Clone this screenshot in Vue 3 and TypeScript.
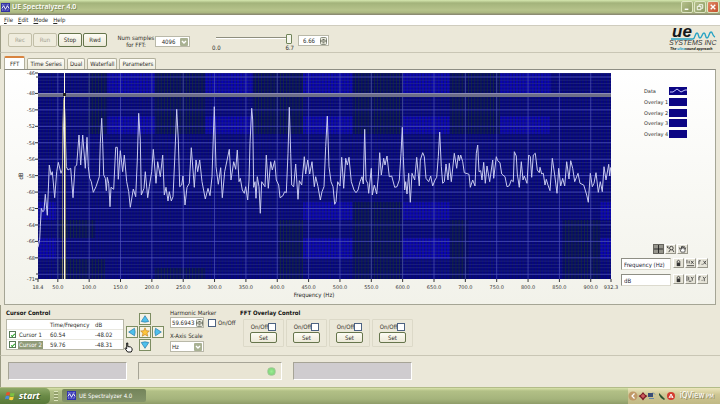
<script setup lang="ts">
import { ref } from 'vue'

interface Tick { at: number; label: string }
interface Patch { x: number; y: number; w: number; h: number }

const menus = ['File', 'Edit', 'Mode', 'Help']
const transport = ref([
  { label: 'Rec', off: true },
  { label: 'Run', off: true },
  { label: 'Stop', off: false },
  { label: 'Rwd', off: false },
])
const tabs = ['FFT', 'Time Series', 'Dual', 'Waterfall', 'Parameters']
const activeTab = ref('FFT')
const samples = ref('4096')
const position = ref(6.66)
const positionText = ref('6.66')
const harmonic = ref('59.6943')
const harmonicOn = ref(false)
const scaleUnit = ref('Hz')
const xName = ref('Frequency (Hz)')
const yName = ref('dB')
const legend = ['Data', 'Overlay 1', 'Overlay 2', 'Overlay 3', 'Overlay 4']
const overlays = ref([false, false, false, false])
const cursors = ref([
  { name: 'Cursor 1', on: true, time: '60.54', db: '-48.02', picked: false },
  { name: 'Cursor 2', on: true, time: '59.76', db: '-48.31', picked: true },
])
const arrows = [
  { name: 'up', turn: 0 },
  { name: 'left', turn: 270 },
  { name: 'right', turn: 90 },
  { name: 'down', turn: 180 },
]

// Plot area inside the chart drawing
const plot = { x: 24, y: 3, w: 573, h: 206 }
const hzToX = (hz: number): number => plot.x + ((hz - 18.4) / 913.9) * plot.w
const dbToY = (db: number): number => plot.y + 4 - (db + 46) * 8.22

const majorHz = Array.from({ length: 18 }, (_, i) => (i + 1) * 50)
const xTicks: Tick[] = [
  { at: plot.x, label: '18.4' },
  ...majorHz.map((hz) => ({ at: hzToX(hz), label: hz.toFixed(1) })),
  { at: plot.x + plot.w, label: '932.3' },
]
const majorDb = Array.from({ length: 13 }, (_, i) => -46 - i * 2)
const yTicks: Tick[] = [
  { at: plot.y, label: '-46' },
  ...majorDb.slice(1, 12).map((db) => ({ at: dbToY(db), label: String(db) })),
  { at: plot.y + plot.h, label: '-71' },
]
const minorX = Array.from({ length: 183 }, (_, i) => hzToX(20 + i * 5)).filter((x) => x < plot.x + plot.w)
const minorY = Array.from({ length: 62 }, (_, i) => dbToY(-45.6 - i * 0.4)).filter((y) => y > plot.y && y < plot.y + plot.h)

const glow: Patch[] = [
  { x: 69, y: 0, w: 48, h: 21 }, { x: 167, y: 0, w: 48, h: 21 }, { x: 265, y: 0, w: 50, h: 21 }, { x: 365, y: 0, w: 47, h: 21 }, { x: 462, y: 0, w: 51, h: 21 },
  { x: 69, y: 43, w: 49, h: 18 }, { x: 167, y: 43, w: 48, h: 18 }, { x: 265, y: 43, w: 50, h: 18 }, { x: 365, y: 43, w: 47, h: 18 }, { x: 462, y: 43, w: 50, h: 18 },
  { x: 0, y: 129, w: 18, h: 18 }, { x: 265, y: 129, w: 50, h: 18 }, { x: 365, y: 129, w: 47, h: 18 }, { x: 562, y: 129, w: 11, h: 18 },
  { x: 0, y: 165, w: 18, h: 21 }, { x: 265, y: 165, w: 50, h: 21 }, { x: 365, y: 165, w: 47, h: 21 }, { x: 562, y: 165, w: 11, h: 21 },
]
const shade: Patch[] = [
  { x: 50, y: 0, w: 19, h: 61 }, { x: 117, y: 0, w: 50, h: 61 }, { x: 215, y: 0, w: 50, h: 61 }, { x: 315, y: 0, w: 50, h: 61 }, { x: 412, y: 0, w: 50, h: 61 },
  { x: 19, y: 147, w: 38, h: 18 }, { x: 19, y: 186, w: 48, h: 20 }, { x: 240, y: 147, w: 25, h: 59 }, { x: 315, y: 129, w: 50, h: 77 }, { x: 412, y: 147, w: 18, h: 59 },
  { x: 525, y: 147, w: 37, h: 59 }, { x: 117, y: 195, w: 50, h: 11 },
]

// Recorded trace in three blocks; each block has its own origin, in thirds of a unit
const blocks = [
  { dx: -114, dy: 81, data: '114,442 119,418 121,380 124,325 128,335 132,332 136,283 142,346 148,195 153,225 157,215 164,293 170,215 175,187 183,220 187,210 193,0 199,200 204,210 212,205 219,293 225,200 230,195 237,105 242,195 248,105 256,205 261,112 265,200 269,235 274,245 280,277 288,260 298,230 301,130 305,55 308,130 311,225 316,235 319,272 322,232 326,250 330,320 333,262 341,268 347,142 352,142 355,238 361,152 368,215 373,165 380,245 386,275 391,322 400,267 407,290 412,180 416,40 421,120 424,285 432,265 436,215 443,293 448,260 455,215 460,148 468,250 473,185 481,230 488,165 493,285 498,262 504,303 508,275 514,303 519,290 524,180 530,28 535,120 539,260 545,255 549,228 555,315 561,262 568,250 574,143 583,262 588,180 593,215 599,180 606,245 616,297 624,265 630,287 636,230 643,20 648,200 655,253 662,203 667,293 674,215 688,148 693,240 701,185 707,208 712,150 717,245' },
  { dx: 546, dy: -9, data: '61,325 67,360 73,370 77,350 83,390 87,330 90,220 95,115 98,150 101,352 105,335 108,385 112,320 117,350 121,430 125,335 135,350 139,255 145,355 152,275 157,300 164,272 169,330 176,345 180,383 188,378 194,365 199,368 204,250 208,112 212,250 215,345 221,350 227,282 234,388 238,332 245,345 253,260 257,312 263,270 269,312 276,275 283,350 287,320 294,350 301,390 306,365 312,350 317,230 322,138 327,290 333,335 339,350 344,403 348,395 353,335 360,348 365,262 371,355 377,265 382,285 387,262 394,335 402,360 408,368 414,360 420,335 426,320 430,342 434,178 438,330 443,340 446,370 454,295 457,375 463,345 470,372 475,320 479,248 484,315 491,265 495,285 501,258 508,320 515,318 524,352 531,350 538,330 543,250 547,172 550,260 554,360 557,335 561,372 566,310 571,397 576,310 584,330 590,262 598,348 601,270 608,248 613,260 618,325 626,335 632,318 638,348 645,330 650,322 655,260 659,186 664,290' },
  { dx: 1206, dy: -9, data: '8,340 13,335 18,282 24,330 28,280 34,335 43,250 50,295 55,255 58,272 62,255 68,275 73,308 87,313 91,352 98,330 105,348 109,250 113,225 117,305 122,302 126,330 131,277 136,340 141,288 149,335 158,270 161,325 169,260 173,272 180,278 185,312 195,320 201,350 208,347 214,330 220,335 223,245 229,258 232,312 238,352 244,275 249,330 253,318 261,340 266,255 271,260 275,322 280,255 286,250 292,300 298,308 300,292 305,312 310,310 315,345 319,328 325,348 330,362 337,265 344,315 351,370 356,295 362,348 368,325 374,348 380,275 387,327 392,272 398,295 404,335 414,310 420,340 431,345 440,375 445,397 451,310 457,350 462,340 468,308 475,367 481,335 487,365 492,290 498,330 506,283 509,318 512,292' },
]
const trace: string = blocks
  .flatMap((b) => b.data.split(' ').map((p) => {
    const [x, y] = p.split(',').map(Number)
    return `${(plot.x + (x + b.dx) / 3).toFixed(1)},${(plot.y + (y + b.dy) / 3).toFixed(1)}`
  }))
  .join(' ')
</script>

<template>
  <div class="desktop">
    <header class="titlebar">
      <svg class="app-icon" viewBox="0 0 10 10"><rect width="10" height="10" fill="#3030a0" /><path d="M1 2h8M1 8h8M2 1v8M8 1v8" stroke="#9a9ae8" stroke-width="1" stroke-dasharray="1 1" /><path d="M1 6 3 3 5 7 7 3 9 6" fill="none" stroke="#fff" /></svg>
      <h1>UE Spectralyzer 4.0</h1>
      <div class="win-buttons">
        <button type="button" aria-label="Minimize"><svg viewBox="0 0 11 11"><path d="M3 8h4" stroke="#fff" stroke-width="1.5" /></svg></button>
        <button type="button" aria-label="Restore"><svg viewBox="0 0 11 11"><path d="M4.500 4.500V3h4v4H7M2.500 4.800h4v3.700h-4z" fill="none" stroke="#fff" /></svg></button>
        <button type="button" aria-label="Close" class="close"><svg viewBox="0 0 11 11"><path d="M3 3l5 5M8 3l-5 5" stroke="#fff" stroke-width="1.500" /></svg></button>
      </div>
    </header>

    <nav class="menubar">
      <button v-for="m in menus" :key="m" type="button"><u>{{ m[0] }}</u>{{ m.slice(1) }}</button>
    </nav>

    <section class="toolbar">
      <div class="transport">
        <button v-for="b in transport" :key="b.label" type="button" class="push" :disabled="b.off">{{ b.label }}</button>
      </div>
      <label class="samples-label" for="samples">Num samples<br>for FFT:</label>
      <div class="drop samples">
        <select id="samples" v-model="samples"><option>4096</option><option>2048</option></select>
        <span class="drop-arrow"><svg viewBox="0 0 8 8"><path d="M2 3l2 2 2-2" fill="none" stroke="#fff" stroke-width="1.400" /></svg></span>
      </div>
      <div class="slide">
        <input v-model.number="position" type="range" min="0" max="6.7" step="0.01" aria-label="Position">
        <div class="slide-scale"><span>0.0</span><span>6.7</span></div>
      </div>
      <div class="spin">
        <input v-model="positionText" type="text" aria-label="Position value">
        <svg viewBox="0 0 7 8"><rect x=".5" y=".5" width="6" height="7" rx="1" fill="#e8e8dc" stroke="#8b8f80" /><path d="M0 4h7M2.500 2.500h2M2.500 5.800h2" stroke="#5f6355" /></svg>
      </div>
      <svg class="logo" viewBox="0 0 50 28" role="img" aria-label="UE Systems Inc">
        <text x="5" y="13" class="logo-ue">ue</text>
        <path d="M4 15h22c2 0 2-6 4-6s1 5 3 5 2-5 4-5 1 5 3 5 2-6 4-6 1 4 4 5" fill="none" stroke="#27a3c4" stroke-width="1.400" />
        <text x="2" y="21" class="logo-sys">SYSTEMS INC</text>
        <text x="3" y="26" class="logo-tag">The <tspan fill="#1d9ccc">ultra</tspan>sound approach</text>
      </svg>
    </section>

    <nav class="tabs" role="tablist">
      <button v-for="t in tabs" :key="t" type="button" role="tab" :class="{ active: t === activeTab }" :aria-selected="t === activeTab" @click="activeTab = t">{{ t }}</button>
    </nav>

    <main class="panel">
      <svg class="chart" viewBox="0 0 600 230" role="img" aria-label="FFT spectrum">
        <defs>
          <clipPath id="shaded"><rect v-for="(p, i) in shade" :key="i" :x="plot.x + p.x" :y="plot.y + p.y" :width="p.w" :height="p.h" /></clipPath>
        </defs>
        <rect :x="plot.x" :y="plot.y" :width="plot.w" :height="plot.h" fill="#060680" />
        <rect v-for="(p, i) in glow" :key="'g' + i" :x="plot.x + p.x" :y="plot.y + p.y" :width="p.w" :height="p.h" fill="#0a04b2" />
        <g stroke="#101848" stroke-opacity=".5"><line v-for="x in minorX" :key="x" :x1="x" :x2="x" :y1="plot.y" :y2="plot.y + plot.h" /></g>
        <g stroke="#303880" stroke-opacity=".5"><line v-for="y in minorY" :key="y" :x1="plot.x" :x2="plot.x + plot.w" :y1="y" :y2="y" /></g>
        <rect v-for="(p, i) in shade" :key="'s' + i" :x="plot.x + p.x" :y="plot.y + p.y" :width="p.w" :height="p.h" fill="#081430" fill-opacity=".3" />
        <g clip-path="url(#shaded)" stroke="#1e3c34" stroke-opacity=".5"><line v-for="x in minorX" :key="x" :x1="x" :x2="x" :y1="plot.y" :y2="plot.y + plot.h" /></g>
        <g stroke="#5358c4" stroke-opacity=".65">
          <line v-for="hz in majorHz" :key="hz" :x1="hzToX(hz)" :x2="hzToX(hz)" :y1="plot.y" :y2="plot.y + plot.h" />
          <line v-for="db in majorDb" :key="db" :x1="plot.x" :x2="plot.x + plot.w" :y1="dbToY(db)" :y2="dbToY(db)" />
        </g>
        <rect :x="plot.x" y="23" :width="plot.w" height="4" fill="#6d6e88" />
        <rect :x="plot.x" y="23" :width="plot.w" height="1" fill="#8c8db4" />
        <polyline :points="trace" fill="none" stroke="#c8caf0" stroke-width="1" />
        <path d="M48.500 209V55L50 28l1.500 27v154" fill="none" stroke="#b5ad6a" stroke-opacity=".7" />
        <rect x="50" :y="plot.y" width="1" :height="plot.h" fill="#fffbe0" />
        <rect x="49" y="23" width="3" height="3" fill="#222" />
        <g stroke="#333">
          <line v-for="t in xTicks" :key="t.label" :x1="t.at" :x2="t.at" y1="209" y2="212" />
          <line v-for="t in yTicks" :key="t.label" x1="21" x2="24" :y1="t.at" :y2="t.at" />
          <line x1="22" x2="24" y1="7" y2="7" /><line x1="22" x2="24" y1="204" y2="204" />
        </g>
        <g class="axis">
          <text v-for="t in xTicks" :key="t.label" :x="t.at" y="219" text-anchor="middle">{{ t.label }}</text>
          <text v-for="t in yTicks" :key="t.label" x="21" :y="t.at + 2" text-anchor="end">{{ t.label }}</text>
        </g>
        <text class="axis-name" x="300" y="227" text-anchor="middle">Frequency (Hz)</text>
        <text class="axis-name" transform="translate(9 106) rotate(-90)" text-anchor="middle">dB</text>
      </svg>

      <aside class="side">
        <ul class="legend">
          <li v-for="(l, i) in legend" :key="l"><span>{{ l }}</span><svg viewBox="0 0 18 8"><rect width="18" height="8" fill="#0c0684" /><path v-if="i === 0" d="M1 5l3 0 4-3 4 3 4-2 2 0" fill="none" stroke="#c8c8ff" /></svg></li>
        </ul>
        <div class="graph-tools">
          <div class="palette">
            <button type="button" class="mini down" aria-label="Cursor tool"><svg viewBox="0 0 10 9"><path d="M5 0v9M0 4.500h10" stroke="#222" /></svg></button>
            <button type="button" class="mini" aria-label="Zoom tool"><svg viewBox="0 0 10 9"><circle cx="6" cy="3.500" r="2" fill="none" stroke="#333" /><path d="M1 2l2 2M5 5l-2 3M7 5l2 3M2 1v2" stroke="#333" /></svg></button>
            <button type="button" class="mini" aria-label="Pan tool"><svg viewBox="0 0 10 9"><path d="M1.500 3l2 5h4l1-5-1.500 2V1.500L5.500 4V1L4 4V1.500L3.500 5z" fill="#fff" stroke="#333" stroke-width=".8" /></svg></button>
          </div>
          <div class="scale-row">
            <input v-model="xName" type="text" aria-label="X scale name">
            <button type="button" class="mini" aria-label="Lock X scale"><svg viewBox="0 0 10 9"><path d="M3 4h4v4H3z" fill="#333" /><path d="M3.500 4V2.500q1.500-2 3 0V4" fill="none" stroke="#333" /></svg></button>
            <button type="button" class="mini" aria-label="Autoscale X"><svg viewBox="0 0 10 9"><path d="M1 1v4M1 7.500h8M3.500 2v3M5.500 2l3 3.500M8.500 2l-3 3.500" stroke="#333" stroke-width=".9" /></svg></button>
            <button type="button" class="mini" aria-label="X format"><svg viewBox="0 0 10 9"><path d="M1 6V2h2M4 6h1M6 2l3 4M9 2l-3 4" fill="none" stroke="#333" stroke-width=".9" /></svg></button>
          </div>
          <div class="scale-row">
            <input v-model="yName" type="text" aria-label="Y scale name">
            <button type="button" class="mini" aria-label="Lock Y scale"><svg viewBox="0 0 10 9"><path d="M3 4h4v4H3z" fill="#333" /><path d="M3.500 4V2.500q1.500-2 3 0V4" fill="none" stroke="#333" /></svg></button>
            <button type="button" class="mini" aria-label="Autoscale Y"><svg viewBox="0 0 10 9"><path d="M1 1v6M3 7h3M3 2v4M5.500 2L7 4l1.500-2M7 4v2.500" fill="none" stroke="#333" stroke-width=".9" /></svg></button>
            <button type="button" class="mini" aria-label="Y format"><svg viewBox="0 0 10 9"><path d="M1 6V2h2M4 6h1M5.500 2L7 4l2-2M7 4v3" fill="none" stroke="#333" stroke-width=".9" /></svg></button>
          </div>
        </div>
      </aside>
    </main>

    <section class="controls">
      <div class="cursor-box">
        <h2>Cursor Control</h2>
        <table>
          <thead><tr><th class="name"></th><th class="time">Time/Freqency</th><th>dB</th></tr></thead>
          <tbody>
            <tr v-for="c in cursors" :key="c.name">
              <td><label><input v-model="c.on" type="checkbox" class="tick"><span :class="{ picked: c.picked }">{{ c.name }}</span></label></td>
              <td>{{ c.time }}</td><td>{{ c.db }}</td>
            </tr>
          </tbody>
        </table>
      </div>

      <div class="pad">
        <button v-for="a in arrows" :key="a.name" type="button" :class="a.name" :aria-label="'Move ' + a.name">
          <svg viewBox="0 0 12 12"><path d="M6 2l4.500 7q-4.500 1.600-9 0z" fill="#4fc0ec" stroke="#2274a8" stroke-width=".8" :transform="`rotate(${a.turn} 6 6)`" /></svg>
        </button>
        <button type="button" class="center" aria-label="Center cursor"><svg viewBox="0 0 12 12"><path d="M6 1l1.500 3.500 3.700.3-2.800 2.500.9 3.700L6 9l-3.300 2 .9-3.700L.8 4.800l3.700-.3z" fill="#ffc63c" stroke="#c07e20" stroke-width=".8" /></svg></button>
        <svg class="hand" viewBox="0 0 10 12"><path d="M3 1h1.200v4l3 .4L9 7v2L8 11H4L1 7l1-.5 1 1z" fill="#fff" stroke="#000" stroke-width="1" /></svg>
      </div>

      <div class="marker">
        <label for="harmonic">Harmonic Marker</label>
        <div class="marker-row">
          <div class="spin wide">
            <input id="harmonic" v-model="harmonic" type="text">
            <svg viewBox="0 0 7 8"><rect x=".5" y=".5" width="6" height="7" rx="1" fill="#e8e8dc" stroke="#8b8f80" /><path d="M0 4h7M2.500 2.500h2M2.500 5.800h2" stroke="#5f6355" /></svg>
          </div>
          <label class="flag"><input v-model="harmonicOn" type="checkbox" class="box">On/Off</label>
        </div>
        <label for="xscale" class="scale-label">X-Axis Scale</label>
        <div class="drop unit">
          <select id="xscale" v-model="scaleUnit"><option>Hz</option><option>CPM</option></select>
          <span class="drop-arrow"><svg viewBox="0 0 8 8"><path d="M2 3l2 2 2-2" fill="none" stroke="#fff" stroke-width="1.400" /></svg></span>
        </div>
      </div>

      <div class="overlay-box">
        <h2>FFT Overlay Control</h2>
        <div class="overlays">
          <div v-for="(o, i) in overlays" :key="i" class="overlay">
            <label>On/Off<input v-model="overlays[i]" type="checkbox" class="box"></label>
            <button type="button" class="push set">Set</button>
          </div>
        </div>
      </div>
    </section>

    <footer class="status">
      <div class="well grey"></div>
      <div class="well wide"><span class="led"></span></div>
      <div class="well grey"></div>
    </footer>

    <nav class="taskbar">
      <button type="button" class="start"><svg viewBox="0 0 11 10"><path d="M1.500 1.500q2-1 3.500 0L4.300 4.500q-1.500-1-3.500 0z" fill="#e8502c" /><path d="M5.500 1.800q2 1 4 0L9 5q-2 1-4-.2z" fill="#7cc142" /><path d="M.7 5.200q2-1 3.500 0L3.500 8.300q-1.500-1-3.500 0z" fill="#4a8be0" /><path d="M4.800 5.500q2 1 4 0L8 8.700q-2 1-4-.2z" fill="#fbd03c" /></svg>start</button>
      <span class="grip"></span>
      <button type="button" class="task"><svg viewBox="0 0 10 10"><rect width="10" height="10" fill="#3030b0" /><path d="M1 2h8M1 8h8M2 1v8M8 1v8" stroke="#a8a8f0" stroke-dasharray="1 1" /><path d="M1 6 3 3 5 7 7 3 9 6" fill="none" stroke="#fff" /></svg>UE Spectralyzer 4.0</button>
      <div class="tray">
        <svg viewBox="0 0 52 12">
          <circle cx="5" cy="6" r="4.500" fill="#c09a68" /><path d="M6.500 3.500L4 6l2.500 2.500" fill="none" stroke="#fff" stroke-width="1.200" />
          <path d="M15 2l2 2.500 2.500 1.500-2.500 2L15 10.500 13 8l-2.500-2L13 4.500z" fill="#7e1c28" /><path d="M15 4v4M13 6h4" stroke="#e87070" />
          <rect x="20" y="3" width="5" height="4" fill="#3a4e78" /><path d="M21 8.500h5M25 2.500l2 2" stroke="#6c88a8" />
          <path d="M31 3l3 3 3 3-1 1-3-2-2-3z" fill="#2c5230" />
          <circle cx="43" cy="6" r="4" fill="#d43c30" /><path d="M41 8l2-4 2 4M42 7h3" fill="none" stroke="#fff" />
        </svg>
        <span class="clock"><b>iQView</b> PM</span>
      </div>
    </nav>
  </div>
</template>

<style>
html, body { margin: 0; background: #ebe8d9; }
</style>

<style scoped>
.desktop { display: flex; flex-direction: column; min-height: 100vh; box-sizing: border-box; font: 6px/8px "DejaVu Sans Condensed", "Open Sans", sans-serif; color: #2c2c28; background: #ebe8d9; }
.desktop *, .desktop *::before { box-sizing: border-box; }
button, input, select { font: inherit; color: inherit; margin: 0; padding: 0; border: 0; background: none; border-radius: 0; min-width: 0; }
svg { display: block; }
h1, h2, ul { margin: 0; padding: 0; list-style: none; }
h2 { font-size: 6px; line-height: 8px; font-weight: 700; color: #111; white-space: nowrap; }

.titlebar { display: flex; align-items: center; gap: 2px; height: 15px; padding: 0 1px 1px; background: linear-gradient(#d6e8b0 0, #a3b37b 3px, #b6c38b 10px, #a9b57f 13px, #8c8c72 14px); }
.app-icon { width: 9px; height: 9px; }
h1 { flex: 1; font: 600 7px/10px "Open Sans", sans-serif; color: #fff; text-shadow: 1px 1px 0 #7e8a58; }
.win-buttons { display: flex; gap: 1px; }
.win-buttons button { width: 12px; height: 12px; border: 1px solid #dfe6c4; border-radius: 2px; background: linear-gradient(135deg, #b5c08c, #8c9a62); }
.win-buttons .close { background: linear-gradient(135deg, #e08a68, #c4502c); }

.menubar { display: flex; gap: 5px; height: 11px; padding: 0 4px; background: #fff; border-bottom: 1px solid #cfccbe; align-items: center; }

.toolbar { display: flex; align-items: flex-start; height: 27px; padding: 7px 3px 0 7px; border-left: 1px solid #9b9b84; border-bottom: 1px solid #c9c6b5; }
.transport { display: flex; gap: 1px; }
.push { width: 24px; height: 14px; border: 1px solid #66754c; border-radius: 2px; background: linear-gradient(#fdfcf4, #ece9d8); text-align: center; }
.push:disabled { color: #a3a192; border-color: #c2bfa8; background: #efecdd; }
.samples-label { width: 38px; margin: 1px 0 0 10px; line-height: 7px; text-align: center; white-space: nowrap; }
.drop { display: flex; align-items: center; height: 11px; margin: 3px 0 0; padding: 1px; background: #fff; border: 1px solid #b9b8a8; }
.drop select { appearance: none; flex: 1; height: 8px; line-height: 8px; outline: 0; }
.drop-arrow { width: 8px; height: 8px; background: #a9b193; border-radius: 1px; }
.samples { width: 35px; }
.samples select { text-align: center; }
.slide { width: 82px; margin-left: 22px; }
.slide input { appearance: none; display: block; width: 80px; height: 11px; background: linear-gradient(#8e8e7e, #8e8e7e) 4px 4px / 74px 1px no-repeat, linear-gradient(#fff, #fff) 4px 5px / 74px 1px no-repeat; }
.slide input::-webkit-slider-thumb { appearance: none; width: 6px; height: 10px; border: 1px solid #71855a; border-radius: 1px; background: #f6f6ee; }
.slide-scale { display: flex; justify-content: space-between; }
.spin { display: flex; align-items: center; width: 31px; height: 11px; margin: 2px 0 0 4px; padding: 0 1px 0 4px; background: #fff; border: 1px solid #b9b8a8; }
.spin input { flex: 1; width: 100%; height: 8px; }
.spin svg { width: 7px; height: 8px; }
.spin.wide { width: 34px; margin: 0; padding: 0 0 0 1px; }
.logo { width: 50px; height: 28px; margin: -9px 0 0 auto; overflow: visible; }
.logo-ue { font: italic 700 17px "Liberation Sans", sans-serif; fill: #16181a; }
.logo-sys { font: italic 7px "Liberation Sans", sans-serif; fill: #333; }
.logo-tag { font: italic 900 4px Lato, sans-serif; fill: #222; }

.tabs { display: flex; align-items: flex-end; gap: 2px; height: 16px; padding-left: 3px; border-left: 1px solid #9b9b84; }
.tabs button { height: 11px; padding: 0 2px; border: 1px solid #b2b09c; border-bottom: 0; border-radius: 2px 2px 0 0; background: linear-gradient(#fdfcf6, #efecdd); white-space: nowrap; }
.tabs .active { height: 13px; padding: 0 5px; border-top: 2px solid #d88440; background: #fff; }

.panel { display: flex; justify-content: space-between; height: 236px; margin: 0 4px; padding-left: 9px; border: 1px solid #a5a595; border-top-color: #8e8e84; background: linear-gradient(#fff, #f2f2ea); }
.chart { flex: 1; min-width: 0; height: 230px; max-width: 600px; overflow: visible; }
.axis { font-family: "DejaVu Sans", sans-serif; font-size: 5px; fill: #333; }
.axis-name { font-size: 6px; fill: #222; }
.side { display: flex; flex-direction: column; justify-content: space-between; width: 94px; padding: 17px 7px 18px 0; }
.legend { display: flex; flex-direction: column; justify-content: space-between; height: 51px; padding-left: 23px; font-family: "DejaVu Sans", sans-serif; font-size: 5px; }
.legend li { display: flex; justify-content: space-between; height: 8px; align-items: center; width: 43px; white-space: nowrap; }
.legend svg { width: 18px; height: 8px; flex: none; }
.graph-tools { display: flex; flex-direction: column; gap: 4px; }
.palette { display: flex; gap: 1px; padding-left: 32px; }
.mini { width: 11px; height: 10px; flex: none; background: #e6e4d8; border: 1px solid; border-color: #fff #99988c #99988c #fff; }
.mini.down { background: #96958c; border-color: #66655e; }
.mini svg { width: 9px; height: 8px; }
.scale-row { display: flex; gap: 1px; }
.scale-row input { width: 50px; height: 12px; margin-right: 1px; padding: 0 2px; background: #fff; border: 1px solid; border-color: #8e8e84 #dcdace #dcdace #8e8e84; color: #223; }

.controls { display: flex; align-items: flex-start; height: 51px; padding: 4px 6px 0 5px; border-left: 1px solid #9b9b84; border-bottom: 1px solid #c9c6b5; }
.cursor-box { width: 118px; }
table { width: 100%; margin-top: 2px; border-collapse: separate; border-spacing: 0; table-layout: fixed; background: #fff; border: 1px solid #b9b8a8; }
th, td { height: 9px; padding: 0; font-weight: 400; text-align: left; line-height: 9px; white-space: nowrap; }
tr > :first-child { width: 43px; padding-left: 2px; }
th.time { width: 45px; }
td { border-top: 1px solid #e9e8e0; }
td label { display: flex; align-items: center; gap: 2px; }
td label span { padding: 0 1px; line-height: 8px; }
.picked { background: #8f9a78; color: #fff; }
.tick, .box { appearance: none; display: grid; place-items: center; width: 7px; height: 7px; flex: none; border: 1px solid #587a58; background: #fff; }
.tick:checked::before, .box:checked::before { content: ""; width: 4px; height: 2px; border: solid #21a121; border-width: 0 0 1px 1px; transform: rotate(-45deg); }
.box { width: 8px; height: 8px; border-color: #4c6282; }

.pad { position: relative; display: grid; grid-template: "a up b" 12px "left center right" 12px "c down d" 12px / 12px 12px 12px; gap: 1px; margin: 4px 0 0 2px; }
.pad button { border: 1px solid #7d8d62; background: #f5f3e6; }
.pad button svg { width: 10px; height: 10px; }
.up { grid-area: up; } .left { grid-area: left; } .right { grid-area: right; } .down { grid-area: down; } .center { grid-area: center; }
.hand { position: absolute; left: -2px; top: 29px; width: 9px; height: 11px; }

.marker { margin-left: 6px; width: 70px; white-space: nowrap; }
.marker > label { display: block; }
.marker-row { display: flex; align-items: center; gap: 4px; height: 11px; }
.flag { display: flex; align-items: center; gap: 2px; }
.marker > .scale-label { margin-top: 4px; }
.unit { width: 34px; margin: 1px 0 0; }

.overlays { display: flex; gap: 2px; margin: 2px 0 0 3px; }
.overlay { display: flex; flex-direction: column; align-items: center; width: 41px; height: 28px; padding-top: 3px; gap: 1px; border: 1px solid #dcd9c8; border-radius: 1px; }
.overlay label { display: flex; align-items: center; }
.push.set { width: 27px; height: 11px; line-height: 8px; }

.status { display: flex; flex: 1; align-items: flex-start; gap: 11px; padding: 6px 8px 0 7px; border-left: 1px solid #9b9b84; }
.well { display: flex; align-items: center; justify-content: flex-end; width: 119px; height: 18px; border: 1px solid; border-color: #a6a496 #fff #fff #a6a496; background: #e9e5d4; }
.well.wide { width: 144px; padding-right: 5px; }
.grey { background: #cfcccf; }
.led { width: 9px; height: 9px; border-radius: 50%; background: radial-gradient(#9cec94, #74cc70); border: 1px solid #a8c89c; }

.taskbar { display: flex; align-items: center; height: 17px; background: linear-gradient(#8c9666 0, #d8e2aa 1px, #b2c086 4px, #a5b47c 12px, #8f9c68); color: #fff; }
.start { display: flex; align-items: center; gap: 3px; width: 50px; height: 16px; padding-left: 5px; border-radius: 0 5px 5px 0; background: linear-gradient(#8ea868, #6a8a46 50%, #587838); font: italic 700 9px/12px "Open Sans", sans-serif; text-shadow: 1px 1px 0 #3f5a2a; }
.start svg { width: 11px; height: 10px; }
.grip { width: 4px; height: 10px; margin: 0 4px; background: repeating-linear-gradient(#dce4bc 0 1px, #93a06c 1px 3px); }
.task { display: flex; align-items: center; gap: 3px; width: 84px; height: 13px; padding-left: 5px; border-radius: 2px; background: linear-gradient(#74845a, #84946a); white-space: nowrap; }
.task svg { width: 9px; height: 9px; }
.tray { display: flex; align-items: center; height: 16px; margin-left: auto; padding-right: 6px; background: linear-gradient(#ece6bc, #cfc794 40%, #c0b884); }
.tray svg { width: 52px; height: 12px; }
.clock { color: #fff; white-space: nowrap; text-shadow: 1px 1px 0 #8a8460; }
.clock b { font-weight: 400; font-size: 8px; }
</style>
